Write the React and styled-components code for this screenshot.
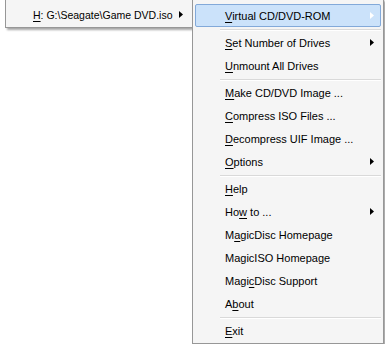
import React from "react";
import styled, { createGlobalStyle } from "styled-components";

const GlobalStyle = createGlobalStyle`
  html, body { margin: 0; padding: 0; background: #ffffff; }
  body { font-family: "Liberation Sans", Arial, sans-serif; }
`;

const Stage = styled.div`
  display: flex;
  align-items: flex-start;
  padding-left: 5px;
  margin-top: -1px;
  width: 385px;
  height: 345px;
  overflow: hidden;
  box-sizing: border-box;
`;

const Menu = styled.div`
  box-sizing: border-box;
  flex: none;
  width: ${(p) => p.$width}px;
  margin-left: ${(p) => p.$offset || 0}px;
  background: #f5f5f5;
  border: 1px solid #979797;
  box-shadow: 2px 2px 2px rgba(0, 0, 0, 0.35);
  padding: ${(p) => p.$padTop}px 0 ${(p) => p.$padBottom}px;
  display: flex;
  flex-direction: column;
  position: relative;
  z-index: ${(p) => p.$z || 1};
`;

const Item = styled.div`
  box-sizing: border-box;
  height: 23px;
  margin: 0 2px;
  padding: 0 ${(p) => p.$padRight}px 0 ${(p) => p.$padLeft}px;
  display: flex;
  align-items: center;
  justify-content: flex-start;
  gap: 4px;
  font-size: ${(p) => p.$size}px;
  color: #000;
  white-space: nowrap;
  border: 1px solid ${(p) => (p.$active ? "#82a9d9" : "transparent")};
  border-radius: 2px;
  background: ${(p) => (p.$active ? "#cbe2fa" : "transparent")};
`;

const Label = styled.span`
  flex: 1 1 auto;
  min-width: 0;
`;

const Key = styled.span`
  text-decoration: underline;
  text-underline-offset: 2px;
`;

const Separator = styled.div`
  height: 4px;
  display: flex;
  align-items: center;
  padding-left: 27px;
  padding-right: 2px;
  &::after {
    content: "";
    flex: 1;
    height: 1px;
    background: #d9d9d9;
    box-shadow: 0 1px 0 #ffffff;
  }
`;

const ArrowSvg = styled.svg`
  display: block;
  flex: none;
`;

const Arrow = ({ light }) => (
  <ArrowSvg width="4" height="7" viewBox="0 0 4 7">
    <polygon points="0,0 4,3.5 0,7" fill={light ? "#ffffff" : "#000000"} />
  </ArrowSvg>
);

const MenuItem = ({ children, sub, active, padLeft = 29, padRight = 6, size = 11 }) => (
  <Item $active={active} $padLeft={padLeft} $padRight={padRight} $size={size}>
    <Label>{children}</Label>
    {sub ? <Arrow light={active} /> : null}
  </Item>
);

export default function App() {
  return (
    <>
      <GlobalStyle />
      <Stage>
        <Menu $width={188} $padTop={3} $padBottom={1} $z={1}>
          <MenuItem sub padLeft={24} padRight={6} size={10.5}>
            <Key>H</Key>: G:\Seagate\Game DVD.iso
          </MenuItem>
        </Menu>
        <Menu $width={192} $offset={-1} $padTop={4} $padBottom={1} $z={2}>
          <MenuItem sub active>
            <Key>V</Key>irtual CD/DVD-ROM
          </MenuItem>
          <Separator />
          <MenuItem sub>
            <Key>S</Key>et Number of Drives
          </MenuItem>
          <MenuItem>
            <Key>U</Key>nmount All Drives
          </MenuItem>
          <Separator />
          <MenuItem>
            <Key>M</Key>ake CD/DVD Image ...
          </MenuItem>
          <MenuItem>
            <Key>C</Key>ompress ISO Files ...
          </MenuItem>
          <MenuItem>
            <Key>D</Key>ecompress UIF Image ...
          </MenuItem>
          <MenuItem sub>
            <Key>O</Key>ptions
          </MenuItem>
          <Separator />
          <MenuItem>
            <Key>H</Key>elp
          </MenuItem>
          <MenuItem sub>
            Ho<Key>w</Key> to ...
          </MenuItem>
          <MenuItem>
            M<Key>a</Key>gicDisc Homepage
          </MenuItem>
          <MenuItem>MagicISO Homepage</MenuItem>
          <MenuItem>
            Magi<Key>c</Key>Disc Support
          </MenuItem>
          <MenuItem>
            A<Key>b</Key>out
          </MenuItem>
          <Separator />
          <MenuItem>
            <Key>E</Key>xit
          </MenuItem>
        </Menu>
      </Stage>
    </>
  );
}
